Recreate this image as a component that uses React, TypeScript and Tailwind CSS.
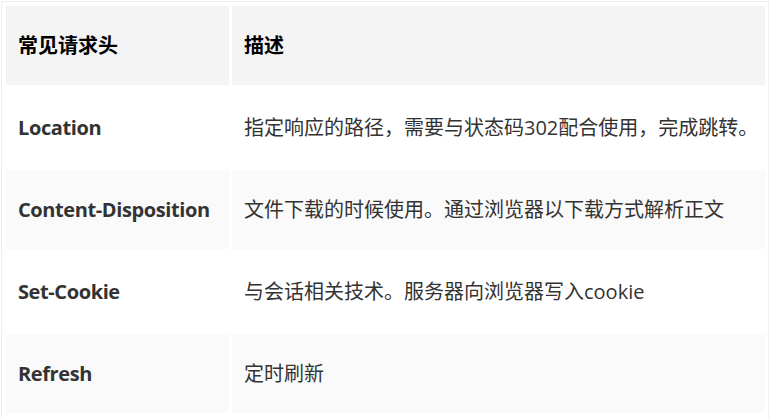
const rows = [
  { name: 'Location', desc: '指定响应的路径，需要与状态码302配合使用，完成跳转。' },
  { name: 'Content-Disposition', desc: '文件下载的时候使用。通过浏览器以下载方式解析正文' },
  { name: 'Set-Cookie', desc: '与会话相关技术。服务器向浏览器写入cookie' },
  { name: 'Refresh', desc: '定时刷新' },
]

export default function App() {
  return (
    <div
      className="w-[770px] h-[418px] bg-white overflow-hidden pl-px pt-px"
      style={{ fontFamily: '"Open Sans", "Noto Sans CJK SC", sans-serif' }}
    >
      <div className="w-[768px] h-[430px] border border-[#efefef] pl-[4px] pt-[4px]">
        <div className="flex flex-col gap-[3px]">
          {/* Header */}
          <div className="flex gap-[3px] h-[79px]">
            <div className="w-[223px] bg-[#f4f4f4] flex items-center px-3 text-[20px] font-bold text-black">
              常见请求头
            </div>
            <div className="w-[533px] bg-[#f4f4f4] flex items-center px-3 text-[20px] font-bold text-black">
              描述
            </div>
          </div>

          {rows.map((row, i) => (
            <div key={row.name} className="flex gap-[3px] h-[79px]">
              <div
                className={`w-[223px] flex items-center px-3 text-[20px] font-bold text-[#333] whitespace-nowrap tracking-[-0.4px] ${
                  i % 2 === 1 ? 'bg-[#fafafa]' : 'bg-white'
                }`}
              >
                {row.name}
              </div>
              <div
                className={`w-[533px] flex items-center px-3 text-[20px] text-[#333] whitespace-nowrap ${
                  i % 2 === 1 ? 'bg-[#fafafa]' : 'bg-white'
                }`}
              >
                {row.desc}
              </div>
            </div>
          ))}
        </div>
      </div>
    </div>
  )
}
